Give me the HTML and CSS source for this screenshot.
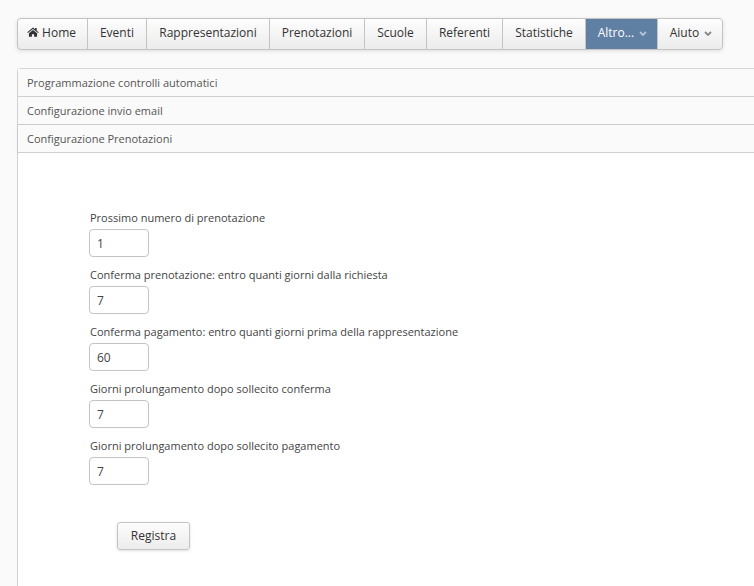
FILE: index.html
```html
<!DOCTYPE html>
<html lang="it">
<head>
    <meta charset="UTF-8">
    <title>Configurazione</title>
    <link rel="stylesheet" href="styles.css">
</head>
<body>
    <ul class="menu">
        <li class="menu-home"><a href="#"><svg class="home-icon" viewBox="0 0 13 11"><path d="M6.5 0.6 L0.2 5.9 L0.9 6.7 L6.5 2.1 L12.1 6.7 L12.8 5.9 L10.6 4 L10.6 1 L8.9 1 L8.9 2.6 Z M2 7 L2 10.8 L5.3 10.8 L5.3 7.9 L7.7 7.9 L7.7 10.8 L11 10.8 L11 7 L6.5 3.3 Z"/></svg> Home</a></li>
        <li class="menu-eventi"><a href="#">Eventi</a></li>
        <li class="menu-rapp"><a href="#">Rappresentazioni</a></li>
        <li class="menu-pren"><a href="#">Prenotazioni</a></li>
        <li class="menu-scuole"><a href="#">Scuole</a></li>
        <li class="menu-ref"><a href="#">Referenti</a></li>
        <li class="menu-stat"><a href="#">Statistiche</a></li>
        <li class="menu-altro active"><a href="#">Altro... <svg class="caret" viewBox="0 0 8 5"><path d="M1 1 L4 4 L7 1"/></svg></a></li>
        <li class="menu-aiuto"><a href="#">Aiuto <svg class="caret" viewBox="0 0 8 5"><path d="M1 1 L4 4 L7 1"/></svg></a></li>
    </ul>

    <div class="accordion">
        <h3>Programmazione controlli automatici</h3>
        <h3>Configurazione invio email</h3>
        <h3>Configurazione Prenotazioni</h3>
        <div class="panel">
            <form class="config-form">
                <div class="config-group">
                    <label for="nextNumber">Prossimo numero di prenotazione</label>
                    <input type="text" id="nextNumber" value="1">
                </div>
                <div class="config-group">
                    <label for="confirmDays">Conferma prenotazione: entro quanti giorni dalla richiesta</label>
                    <input type="text" id="confirmDays" value="7">
                </div>
                <div class="config-group">
                    <label for="paymentDays">Conferma pagamento: entro quanti giorni prima della rappresentazione</label>
                    <input type="text" id="paymentDays" value="60">
                </div>
                <div class="config-group">
                    <label for="extendConfirm">Giorni prolungamento dopo sollecito conferma</label>
                    <input type="text" id="extendConfirm" value="7">
                </div>
                <div class="config-group">
                    <label for="extendPayment">Giorni prolungamento dopo sollecito pagamento</label>
                    <input type="text" id="extendPayment" value="7">
                </div>
                <button type="button" class="save-button">Registra</button>
            </form>
        </div>
    </div>
</body>
</html>
```

FILE: styles.css
```css
html {
    overflow: hidden;
}

body {
    margin: 0;
    padding: 18px 0 0 17px;
    width: 760px;
    height: 568px;
    overflow: hidden;
    background: #fafafa;
    font-family: "Open Sans", sans-serif;
    font-size: 11px;
    color: #444;
}

.menu {
    display: flex;
    width: 706px;
    height: 32px;
    box-sizing: border-box;
    margin: 0;
    padding: 0;
    list-style: none;
    border: 1px solid #c4c4c4;
    border-radius: 4px;
    background: linear-gradient(#fdfdfd, #ececec);
    box-shadow: 0 1px 4px rgba(0,0,0,0.12);
    overflow: hidden;
}

.menu li {
    box-sizing: border-box;
    border-right: 1px solid #c4c4c4;
    text-align: center;
}

.menu li:last-child {
    border-right: none;
}

.menu a {
    display: block;
    line-height: 28px;
    font-size: 12px;
    color: #333;
    text-decoration: none;
    white-space: nowrap;
}

.menu-home { width: 70px; padding-right: 2px; }
.menu-eventi { width: 59px; }
.menu-rapp { width: 123px; }
.menu-pren { width: 95px; }
.menu-scuole { width: 62px; }
.menu-ref { width: 76px; }
.menu-stat { width: 83px; }
.menu-altro { width: 72px; padding-left: 2px; }
.menu-aiuto { flex: 1; padding-left: 2px; }

.menu .active {
    background: #5f7fa3;
    border-right: 1px solid #c4c4c4;
}

.menu .active a {
    color: #fff;
}

.home-icon {
    width: 12px;
    height: 10px;
    fill: #333;
}

.caret {
    width: 8px;
    height: 5px;
    margin-left: 2px;
    vertical-align: 1px;
    fill: none;
    stroke: #888;
    stroke-width: 1.8;
}

.active .caret {
    stroke: #b4c4d6;
}

.accordion {
    margin-top: 18px;
    border-left: 1px solid #d0d0d0;
    border-top: 1px solid #d8d8d8;
    border-top-left-radius: 4px;
}

.accordion h3 {
    margin: 0;
    height: 28px;
    box-sizing: border-box;
    padding-left: 9px;
    border-bottom: 1px solid #cfcfcf;
    background: #fafafa;
    font-size: 11px;
    font-weight: normal;
    line-height: 27px;
    color: #555;
}

.accordion h3:last-of-type {
    box-shadow: 0 1px 3px rgba(0,0,0,0.08);
}

.panel {
    height: 433px;
    background: #fff;
    padding: 57px 0 0 71px;
    box-sizing: border-box;
}

.config-group {
    margin-bottom: 10px;
}

.config-group label {
    display: block;
    height: 15px;
    margin-bottom: 4px;
    line-height: 15px;
    padding-left: 1px;
}

.config-group input {
    display: block;
    width: 60px;
    height: 28px;
    box-sizing: border-box;
    padding: 0 7px;
    border: 1px solid #c4c4c4;
    border-radius: 4px;
    font-family: inherit;
    font-size: 12px;
    color: #444;
    background: #fff;
}

.save-button {
    display: block;
    width: 73px;
    height: 28px;
    margin: 37px 0 0 28px;
    padding: 0 0 2px;
    border: 1px solid #c4c4c4;
    border-radius: 3px;
    background: linear-gradient(#fdfdfd, #ececec);
    box-shadow: 0 1px 3px rgba(0,0,0,0.12);
    font-family: inherit;
    font-size: 12px;
    color: #333;
}
```
